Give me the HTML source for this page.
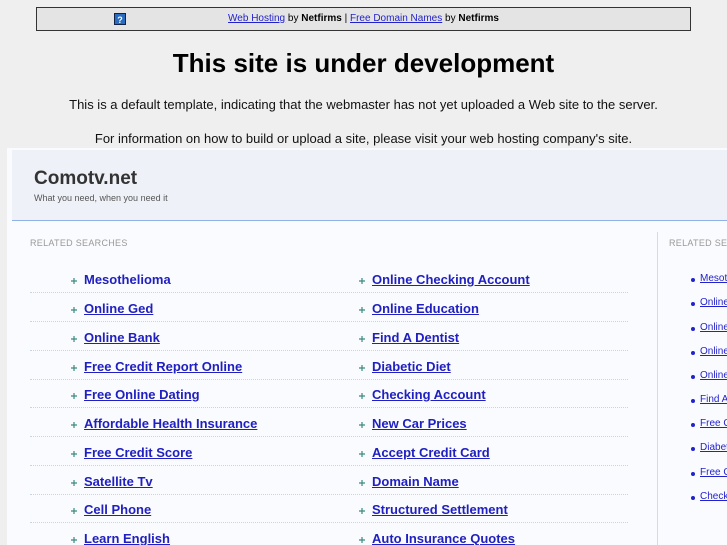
<!DOCTYPE html>
<html><head><meta charset="utf-8"><style>
*{margin:0;padding:0;box-sizing:border-box}
html,body{width:727px;height:545px;overflow:hidden}
body{background:#efefef;font-family:"Liberation Sans",sans-serif;position:relative}
.bar{position:absolute;left:36px;top:7px;width:655px;height:24px;border:1px solid #333;background:#e4e4e4;font-size:10px;text-align:center;line-height:21px}
.bar a{color:#22c;text-decoration:underline}
.q{position:absolute;left:77px;top:5px;width:12px;height:12px;background:#2a6cc0;color:#fff;font-size:9px;line-height:12px;font-weight:bold;border:1px solid #124}
h1{position:absolute;top:48px;left:0;width:727px;text-align:center;font-size:26px;font-weight:bold;color:#000}
.p{position:absolute;left:0;width:727px;text-align:center;font-size:13px;color:#111}
.frame{position:absolute;left:7px;top:148px;width:720px;height:397px;background:#fafbfe;overflow:hidden}
.hdr{position:absolute;left:5px;top:2px;width:720px;height:71px;background:#eef2f8;border-bottom:1px solid #8fb0e8}
.t{position:absolute;left:22px;top:18px;font-size:19px;font-weight:bold;color:#333}
.tg{position:absolute;left:22px;top:43px;font-size:9px;color:#555}
.rs{position:absolute;font-size:9px;color:#999;letter-spacing:.3px;white-space:nowrap}
.row{position:absolute;left:23px;width:598px;height:29px;border-bottom:1px dotted #c8d4e4}
.it{position:absolute;top:8px;font-size:13px;font-weight:bold;color:#2020c0;text-decoration:underline;white-space:nowrap}
.it:before{content:"";position:absolute;left:-13px;top:6px;width:6px;height:6px;background:#3a8a80;clip-path:polygon(40% 0,60% 0,60% 40%,100% 40%,100% 60%,60% 60%,60% 100%,40% 100%,40% 60%,0 60%,0 40%,40% 40%)}
.vd{position:absolute;left:650px;top:84px;width:1px;height:320px;background:#cfdcef}
.ri{position:absolute;left:693px;font-size:10px;color:#22c;text-decoration:underline;white-space:nowrap}
.ri:before{content:"";position:absolute;left:-9px;top:5px;width:4px;height:4px;border-radius:50%;background:#22c}
</style></head><body>
<div class="bar"><span class="q">?</span><a>Web Hosting</a> by <b>Netfirms</b> | <a>Free Domain Names</a> by <b>Netfirms</b></div>
<h1>This site is under development</h1>
<div class="p" style="top:97px">This is a default template, indicating that the webmaster has not yet uploaded a Web site to the server.</div>
<div class="p" style="top:131px">For information on how to build or upload a site, please visit your web hosting company's site.</div>
<div class="frame">
<div class="hdr"><div class="t">Comotv.net</div><div class="tg">What you need, when you need it</div></div>
<div class="rs" style="left:23px;top:90px">RELATED SEARCHES</div>
<div class="vd"></div>
<div class="rs" style="left:662px;top:90px">RELATED SEARCHES</div>
<div style="position:absolute;left:0;top:-148px">
<div class="row" style="top:264px"><span class="it" style="left:54px;text-decoration:none">Mesothelioma</span><span class="it" style="left:342px">Online Checking Account</span></div>
<div class="row" style="top:293px"><span class="it" style="left:54px">Online Ged</span><span class="it" style="left:342px">Online Education</span></div>
<div class="row" style="top:322px"><span class="it" style="left:54px">Online Bank</span><span class="it" style="left:342px">Find A Dentist</span></div>
<div class="row" style="top:351px"><span class="it" style="left:54px">Free Credit Report Online</span><span class="it" style="left:342px">Diabetic Diet</span></div>
<div class="row" style="top:379px"><span class="it" style="left:54px">Free Online Dating</span><span class="it" style="left:342px">Checking Account</span></div>
<div class="row" style="top:408px"><span class="it" style="left:54px">Affordable Health Insurance</span><span class="it" style="left:342px">New Car Prices</span></div>
<div class="row" style="top:437px"><span class="it" style="left:54px">Free Credit Score</span><span class="it" style="left:342px">Accept Credit Card</span></div>
<div class="row" style="top:466px"><span class="it" style="left:54px">Satellite Tv</span><span class="it" style="left:342px">Domain Name</span></div>
<div class="row" style="top:494px"><span class="it" style="left:54px">Cell Phone</span><span class="it" style="left:342px">Structured Settlement</span></div>
<div class="row" style="top:523px"><span class="it" style="left:54px">Learn English</span><span class="it" style="left:342px">Auto Insurance Quotes</span></div>
<span class="ri" style="top:273px">Mesothelioma</span>
<span class="ri" style="top:297px">Online Ged</span>
<span class="ri" style="top:322px">Online Bank</span>
<span class="ri" style="top:346px">Online Dating</span>
<span class="ri" style="top:370px">Online Education</span>
<span class="ri" style="top:394px">Find A Dentist</span>
<span class="ri" style="top:418px">Free Credit</span>
<span class="ri" style="top:442px">Diabetic Diet</span>
<span class="ri" style="top:467px">Free Credit</span>
<span class="ri" style="top:491px">Checking</span>
</div>
</div>
</body></html>
